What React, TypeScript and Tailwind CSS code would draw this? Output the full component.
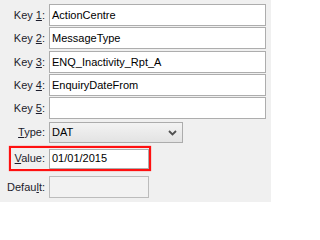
import React from "react";

const font = { fontFamily: '"Liberation Sans", Arial, sans-serif' };

function Label({ children, className = "" }: { children: React.ReactNode; className?: string }) {
  return (
    <div className={`shrink-0 text-right text-[11px] leading-none text-[#1c1c2c] ${className}`}>{children}</div>
  );
}

function Field({ value, w = "w-[217px]", h = "h-[22px]" }: { value?: string; w?: string; h?: string }) {
  return (
    <div className={`${w} ${h} ml-[4px] flex items-center border border-[#adadad] bg-white pl-[2px] text-[11px] leading-none text-black`}>
      {value}
    </div>
  );
}

export default function App() {
  const keys = [
    { n: "1", v: "ActionCentre", mt: "mt-0" },
    { n: "2", v: "MessageType", mt: "mt-[1px]" },
    { n: "3", v: "ENQ_Inactivity_Rpt_A", mt: "mt-[2px]" },
    { n: "4", v: "EnquiryDateFrom", mt: "mt-[1px]" },
    { n: "5", v: "", mt: "mt-[1px]" },
  ];
  return (
    <div className="w-[271px] h-[202px] overflow-hidden bg-[#f0f0f0] pt-[4px]" style={font}>
      {keys.map((k) => (
        <div key={k.n} className={`flex items-center ${k.mt}`}>
          <Label className="w-[45px]">
            Key <span className="underline">{k.n}</span>:
          </Label>
          <Field value={k.v} />
        </div>
      ))}
      <div className="mt-[3px] flex items-center">
        <Label className="w-[45px]">
          <span className="underline">T</span>ype:
        </Label>
        <div className="ml-[4px] flex h-[21px] w-[134px] items-center justify-between border border-[#acacac] bg-gradient-to-b from-[#f3f3f3] to-[#e3e3e3] pl-[2px] pr-[5px] text-[11px] leading-none text-black">
          <span>DAT</span>
          <svg width="9" height="6" viewBox="0 0 9 6">
            <path d="M1 1 L4.5 4.5 L8 1" fill="none" stroke="#505050" strokeWidth="1.8" />
          </svg>
        </div>
      </div>
      <div className="mt-[3px] ml-[9px] flex h-[25px] w-[142px] items-center border-2 border-[#ff1010] shadow-[0_0_1px_#ff4040]">
        <Label className="w-[34px]">
          <span className="underline">V</span>alue:
        </Label>
        <Field value="01/01/2015" w="w-[100px]" h="h-[20px]" />
      </div>
      <div className="mt-[5px] flex items-center">
        <Label className="w-[45px]">
          Defau<span className="underline">l</span>t:
        </Label>
        <div className="ml-[4px] h-[22px] w-[100px] border border-[#bcbcbc] bg-[#f2f2f2]" />
      </div>
    </div>
  );
}
